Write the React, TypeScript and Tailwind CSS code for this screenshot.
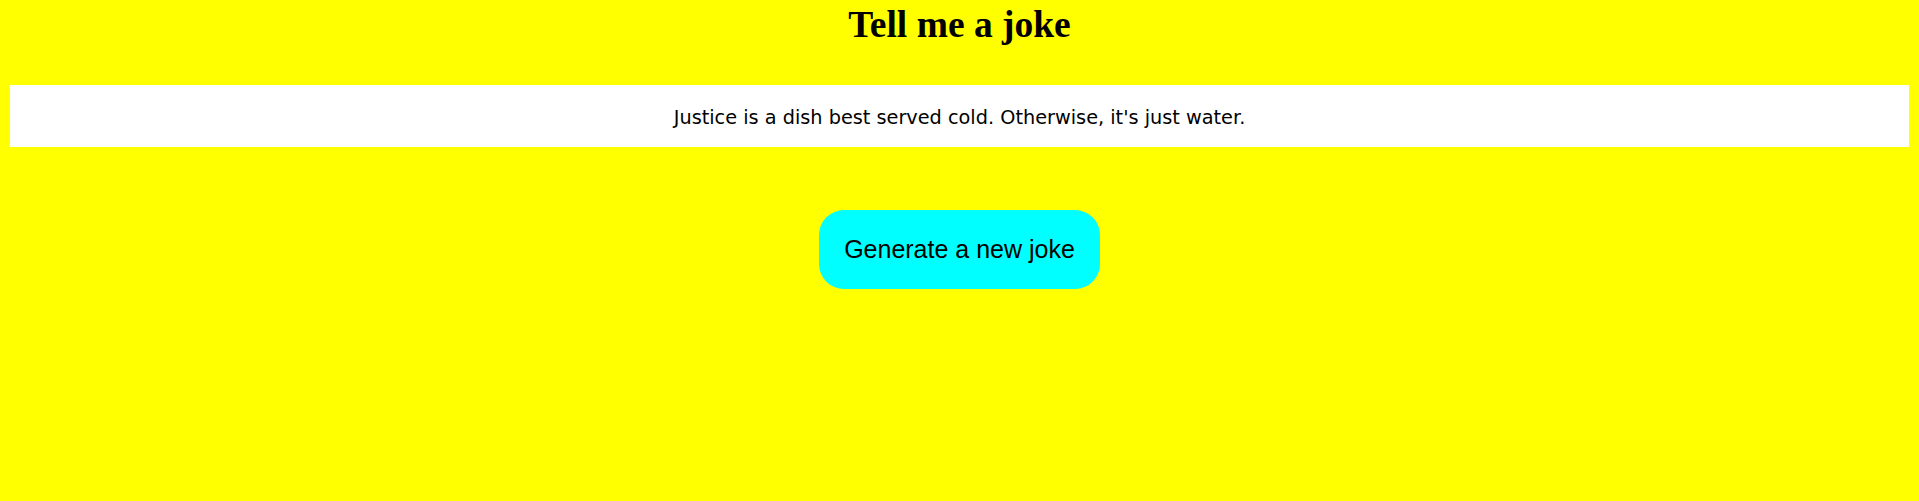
export default function App() {
  return (
    <div className="min-h-screen bg-[#ffff00] flex flex-col">
      <h1 className="pt-[2px] text-center font-['Liberation_Serif','Times_New_Roman',serif] font-bold text-[37.5px] leading-[46px] text-black">
        Tell me a joke
      </h1>

      <div className="mt-[37px] mx-[10px] bg-white h-[62px] flex items-center justify-center pt-[4px]">
        <p className="font-['Comic_Sans_MS','DejaVu_Sans',sans-serif] text-[19.3px] text-black">
          Justice is a dish best served cold. Otherwise, it's just water.
        </p>
      </div>

      <div className="mt-[63px] flex justify-center">
        <button
          type="button"
          className="bg-[#00ffff] text-black font-['Liberation_Sans',Arial,sans-serif] text-[25px] leading-[29px] px-[25px] py-[25px] rounded-[25px] whitespace-nowrap"
        >
          Generate a new joke
        </button>
      </div>
    </div>
  );
}
